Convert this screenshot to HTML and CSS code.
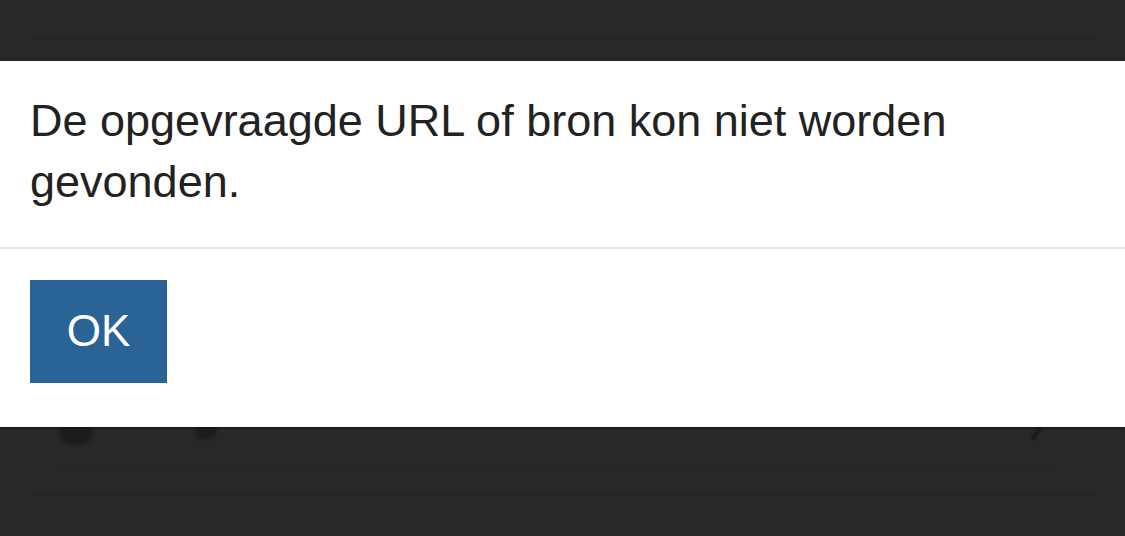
FILE: index.html
```html
<!DOCTYPE html>
<html lang="nl">
<head>
<meta charset="utf-8">
<title>Melding</title>
<link rel="stylesheet" href="styles.css">
</head>
<body>
<div class="page">
  <div class="topbar"></div>
  <div class="row">
    <span class="icon-a"></span>
    <span class="icon-b"></span>
    <span class="spacer"></span>
    <span class="icon-c"></span>
  </div>
  <div class="dashes"></div>
  <div class="bottombar"></div>
</div>
<div class="modal">
  <div class="modal-body">
    <p class="message">De opgevraagde URL of bron kon niet worden gevonden.</p>
  </div>
  <div class="modal-footer">
    <button class="btn-ok" type="button">OK</button>
  </div>
</div>
</body>
</html>
```
FILE: styles.css
```css
html, body {
  margin: 0;
  padding: 0;
  background: #282828;
  height: 100%;
  overflow: hidden;
  font-family: "Liberation Sans", Arial, Helvetica, sans-serif;
}

.page {
  padding: 37px 30px 0 32px;
}

.topbar {
  height: 2px;
  background: #242424;
}

.row {
  display: flex;
  align-items: flex-start;
  height: 427px;
  padding-left: 27px;
}

.icon-a {
  margin-top: 382px;
  width: 34px;
  height: 24px;
  border-radius: 50%;
  background: #1c1c1c;
  filter: blur(1.5px);
}

.icon-b {
  margin-top: 382px;
  margin-left: 102px;
  width: 22px;
  height: 18px;
  border-radius: 4px 10px 10px 4px;
  background: #1d1d1d;
  filter: blur(1.5px);
}

.spacer {
  flex: 1;
}

.icon-c {
  margin-top: 386px;
  margin-right: 56px;
  width: 5px;
  height: 16px;
  background: #1a1a1a;
  transform: rotate(30deg);
  filter: blur(0.8px);
}

.dashes {
  height: 2px;
  margin: 0 40px 25px 28px;
  background: repeating-linear-gradient(90deg, #262626 0 28px, transparent 28px 32px);
}

.bottombar {
  height: 2px;
  background: #242424;
}

.modal {
  position: absolute;
  top: 61px;
  left: 0;
  right: 0;
  background: #ffffff;
  box-shadow: 0 1px 2px rgba(0, 0, 0, 0.5);
}

.modal-body {
  padding: 29px 30px 35px 30px;
}

.message {
  margin: 0;
  color: #222222;
  font-size: 45px;
  line-height: 61px;
}

.modal-footer {
  border-top: 2px solid #e5e5e5;
  padding: 31px 30px 44px 30px;
}

.btn-ok {
  display: block;
  width: 137px;
  height: 103px;
  border: 0;
  border-radius: 0;
  margin: 0;
  padding: 0 0 2px 0;
  background: #2a6496;
  color: #ffffff;
  font-family: "Liberation Sans", Arial, Helvetica, sans-serif;
  font-size: 44px;
  cursor: pointer;
}
```
